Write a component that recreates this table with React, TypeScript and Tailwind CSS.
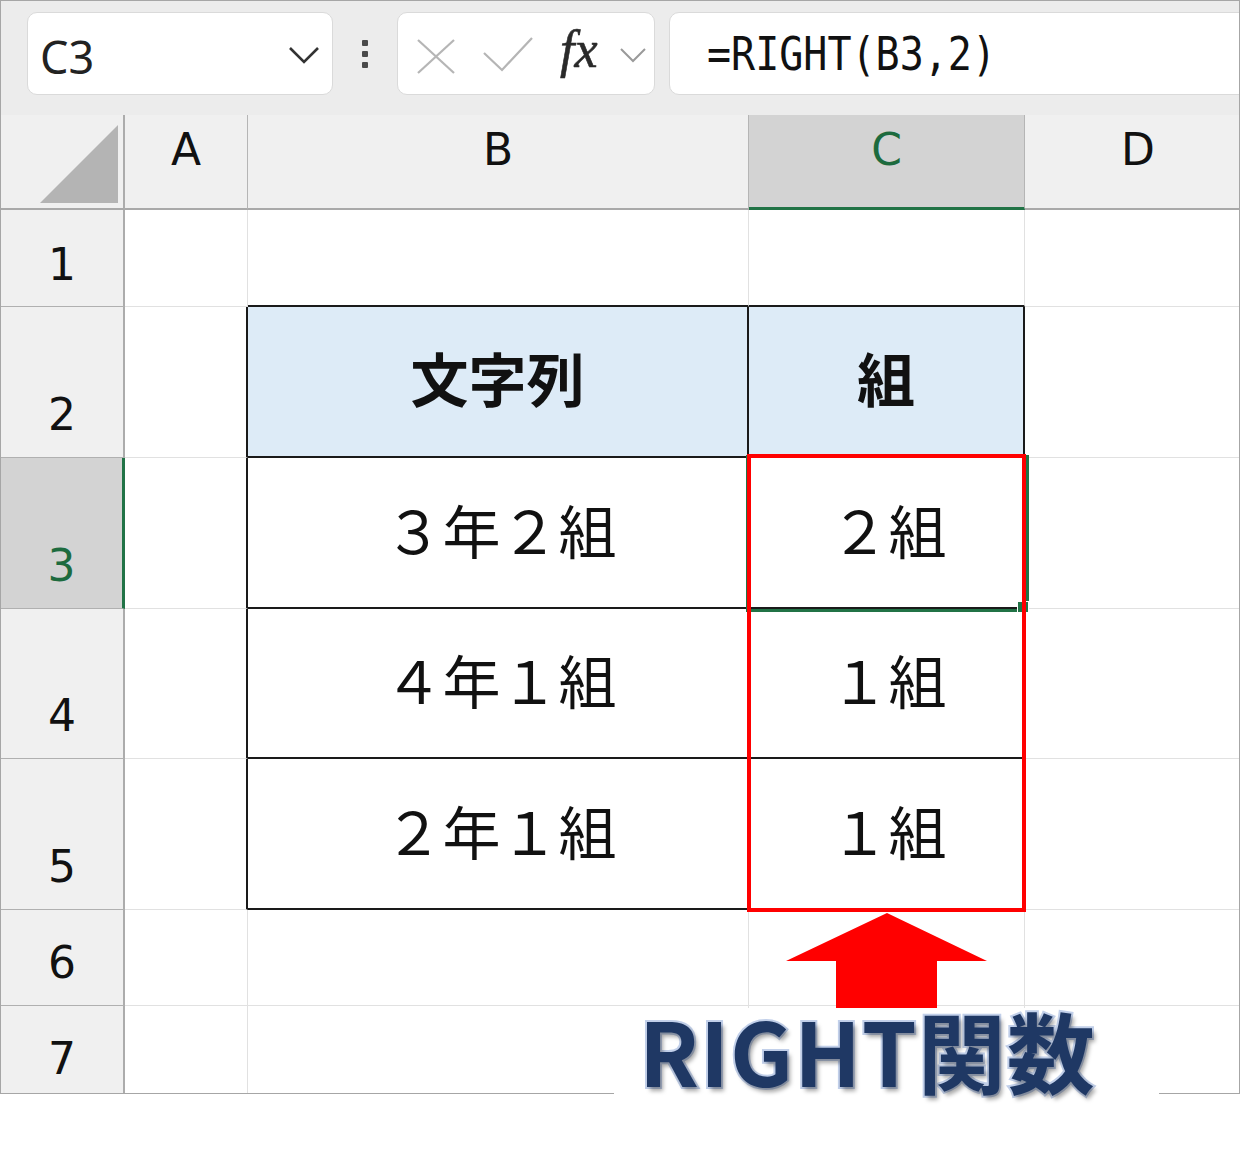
import type { ReactNode } from "react";

// Excel風のRIGHT関数サンプル画面

type Edge = "grid" | "black" | "none";

function Cell({
  right = "grid",
  bottom = "grid",
  className = "",
  children,
}: {
  right?: Edge;
  bottom?: Edge;
  className?: string;
  children?: ReactNode;
}) {
  const r =
    right === "grid" ? "border-r border-r-[#e1e1e1]" : right === "black" ? "border-r-2 border-r-[#1a1a1a]" : "";
  const b =
    bottom === "grid" ? "border-b border-b-[#e1e1e1]" : bottom === "black" ? "border-b-2 border-b-[#1a1a1a]" : "";
  return (
    <div
      className={`${r} ${b} ${className} flex items-center justify-center font-['Noto_Sans_CJK_JP',sans-serif] text-[58px] leading-none text-[#111]`}
    >
      {children}
    </div>
  );
}

function ColHead({ label, active = false }: { label: string; active?: boolean }) {
  return (
    <div
      className={
        active
          ? "flex items-start justify-center border-r border-[#b5b5b5] border-b-[3px] border-b-[#217346] bg-[#d3d3d3] pt-[13px] text-[#1d6b3e]"
          : "flex items-start justify-center border-r border-b-2 border-r-[#b5b5b5] border-b-[#a9a9a9] bg-[#f0f0f0] pt-[13px] text-[#111]"
      }
    >
      <span className="font-['DejaVu_Sans',sans-serif] text-[44px] leading-none">{label}</span>
    </div>
  );
}

function RowHead({ n, active = false, last = false, pb = "pb-[20px]" }: { n: string; active?: boolean; last?: boolean; pb?: string }) {
  return (
    <div
      className={`flex items-end justify-center ${pb} ${
        active
          ? "border-r-[3px] border-r-[#217346] bg-[#d3d3d3] text-[#1d6b3e]"
          : "border-r-2 border-r-[#acacac] bg-[#f0f0f0] text-[#111]"
      } ${last ? "" : "border-b border-b-[#b0b0b0]"}`}
    >
      <span className="font-['DejaVu_Sans',sans-serif] text-[44px] leading-none">{n}</span>
    </div>
  );
}

function Toolbar() {
  return (
    <div className="flex h-[114px] items-start overflow-hidden bg-[#ececec] pt-[11px]">
      {/* 名前ボックス */}
      <div className="ml-[26px] flex h-[83px] w-[306px] shrink-0 items-center justify-between rounded-[10px] border border-[#dadada] bg-white pl-[12px] pr-[12px]">
        <span className="pt-[6px] font-['Noto_Sans',sans-serif] text-[45px] leading-none text-[#222]">C3</span>
        <svg width="32" height="20" viewBox="0 0 32 20" className="mt-[2px]">
          <polyline points="2,3 16,17 30,3" fill="none" stroke="#333" strokeWidth="2.6" />
        </svg>
      </div>
      {/* 区切りの点 */}
      <div className="flex h-[83px] w-[64px] shrink-0 flex-col items-center justify-center gap-[5px]">
        <div className="h-[6px] w-[6px] rounded-[1px] bg-[#4a4a4a]" />
        <div className="h-[6px] w-[6px] rounded-[1px] bg-[#4a4a4a]" />
        <div className="h-[6px] w-[6px] rounded-[1px] bg-[#4a4a4a]" />
      </div>
      {/* ×・✓・fx */}
      <div className="relative h-[83px] w-[258px] shrink-0 rounded-[10px] border border-[#dadada] bg-white">
        <svg width="258" height="83" viewBox="0 0 258 83" className="absolute left-0 top-0">
          <line x1="20" y1="27" x2="56" y2="60" stroke="#b5b5b5" strokeWidth="2.2" />
          <line x1="56" y1="27" x2="20" y2="60" stroke="#b5b5b5" strokeWidth="2.2" />
          <polyline points="86,40 104,57 134,25" fill="none" stroke="#b5b5b5" strokeWidth="2.2" />
          <polyline points="223,36 235,48 247,36" fill="none" stroke="#9a9a9a" strokeWidth="2" />
        </svg>
        <span className="absolute left-[162px] top-[11px] font-['Liberation_Serif',serif] text-[52px] italic leading-none text-[#2a2a2a] [-webkit-text-stroke:0.6px_#2a2a2a]">
          fx
        </span>
      </div>
      {/* 数式バー */}
      <div className="ml-[14px] flex h-[83px] w-[620px] shrink-0 items-center rounded-[10px] border border-[#dadada] bg-white pl-[37px]">
        <span className="inline-block scale-y-[1.16] font-['DejaVu_Sans_Mono',monospace] text-[40px] leading-none text-[#111]">
          =RIGHT(B3,2)
        </span>
      </div>
    </div>
  );
}

export default function App() {
  const head = "bg-[#ddebf7] font-bold pb-[10px]";
  return (
    <div className="relative h-[1154px] w-[1240px] overflow-hidden bg-white">
      <div className="flex h-[1094px] w-[1240px] flex-col border border-[#a6a6a6]">
        <Toolbar />
        <div className="grid grid-cols-[124px_123px_501px_276px_214px] grid-rows-[95px_97px_151px_151px_150px_151px_96px_87px]">
          {/* 列見出し */}
          <div className="border-r-2 border-b-2 border-r-[#acacac] border-b-[#a9a9a9] bg-[#f0f0f0]">
            <svg width="122" height="93" viewBox="0 0 122 93" className="block">
              <polygon points="39,88 117,10 117,88" fill="#b4b4b4" />
            </svg>
          </div>
          <ColHead label="A" />
          <ColHead label="B" />
          <ColHead label="C" active />
          <div className="flex items-start justify-center border-b-2 border-b-[#a9a9a9] bg-[#f0f0f0] pl-[12px] pt-[13px] text-[#111]">
            <span className="font-['DejaVu_Sans',sans-serif] text-[44px] leading-none">D</span>
          </div>

          {/* 1行目 */}
          <RowHead n="1" pb="pb-[19px]" />
          <Cell />
          <Cell bottom="black" />
          <Cell bottom="black" />
          <Cell right="none" />

          {/* 2行目 */}
          <RowHead n="2" />
          <Cell right="black" />
          <Cell right="black" bottom="black" className={head}>
            文字列
          </Cell>
          <Cell right="black" bottom="black" className={head}>
            組
          </Cell>
          <Cell right="none" />

          {/* 3行目 */}
          <RowHead n="3" active />
          <Cell right="black" />
          <Cell right="black" bottom="black" className="pb-[8px] pl-[6px]">
            ３年２組
          </Cell>
          <Cell right="black" bottom="black" className="pb-[8px] pl-[5px]">
            ２組
          </Cell>
          <Cell right="none" />

          {/* 4行目 */}
          <RowHead n="4" />
          <Cell right="black" />
          <Cell right="black" bottom="black" className="pb-[8px] pl-[6px]">
            ４年１組
          </Cell>
          <Cell right="black" bottom="black" className="pb-[8px] pl-[5px]">
            １組
          </Cell>
          <Cell right="none" />

          {/* 5行目 */}
          <RowHead n="5" />
          <Cell right="black" />
          <Cell right="black" bottom="black" className="pb-[8px] pl-[6px]">
            ２年１組
          </Cell>
          <Cell right="black" bottom="black" className="pb-[8px] pl-[5px]">
            １組
          </Cell>
          <Cell right="none" />

          {/* 6行目 */}
          <RowHead n="6" />
          <Cell />
          <Cell />
          <Cell />
          <Cell right="none" />

          {/* 7行目 */}
          <RowHead n="7" last pb="pb-[12px]" />
          <Cell bottom="none" />
          <Cell bottom="none" />
          <Cell bottom="none" />
          <Cell right="none" bottom="none" />
        </div>
      </div>

      {/* 選択セル C3 */}
      <div className="absolute left-[746px] top-[455px] h-[157px] w-[283px] border-[3px] border-[#217346]" />
      <div className="absolute left-[1017px] top-[601px] h-[12px] w-[12px] border border-white bg-[#217346]" />

      {/* 赤枠 */}
      <div className="absolute left-[747px] top-[454px] h-[458px] w-[279px] border-4 border-[#ff0000]" />

      {/* 矢印 */}
      <svg width="202" height="96" viewBox="0 0 202 96" className="absolute left-[786px] top-[913px]">
        <polygon points="101,0 201,48 151,48 151,95 50,95 50,48 0,48" fill="#ff0000" />
      </svg>

      {/* ラベル */}
      <div className="absolute left-[614px] top-[1008px] h-[146px] w-[545px] bg-white">
        <div className="-mt-[3px] pl-[25px] font-['Noto_Sans_CJK_JP',sans-serif] text-[88px] font-bold leading-none tracking-[1px] text-[#1f3864] [-webkit-text-stroke:4px_#c2d0ea] [paint-order:stroke_fill] [text-shadow:3px_4px_4px_rgba(0,0,0,0.35)]">
          RIGHT関数
        </div>
      </div>
    </div>
  );
}
